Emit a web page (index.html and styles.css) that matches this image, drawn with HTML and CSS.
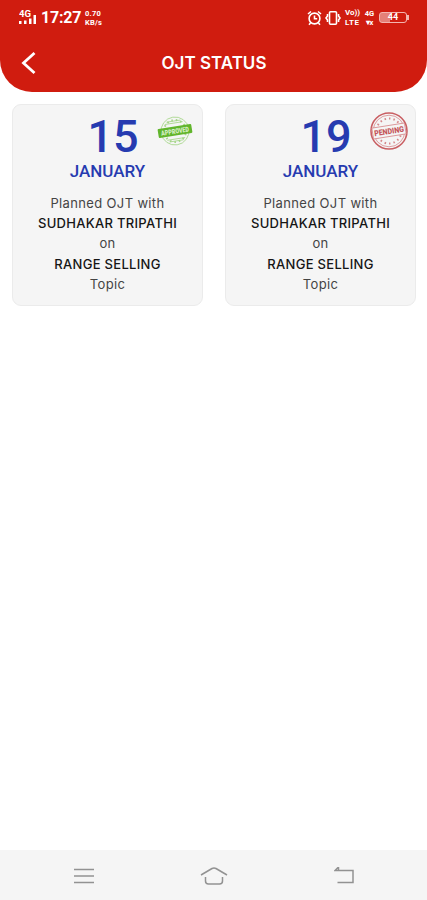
FILE: index.html
```html
<!DOCTYPE html>
<html lang="en">
<head>
  <meta charset="UTF-8">
  <meta name="viewport" content="width=device-width, initial-scale=1">
  <title>OJT Status</title>
  <link rel="stylesheet" href="styles.css">
</head>
<body>
  <header class="header">
    <div class="statusbar">
      <svg class="signal" width="18" height="15" viewBox="0 0 18 15">
        <text x="0" y="7" textLength="12" lengthAdjust="spacingAndGlyphs">4G</text>
        <path d="M0 11h2.500v3H0zM5 10.500h2.500V14H5zM10 8.500h2.500V14H10zM14.500 5H17v9h-2.500z"/>
      </svg>
      <span class="time">17:27</span>
      <div class="speed"><span>0.70</span><span>KB/s</span></div>
      <div class="status-icons">
        <svg class="line-icon" width="15" height="16" viewBox="0 0 15 16">
          <circle cx="7.500" cy="8.500" r="5.400"/>
          <path d="M1 4l3-2.500M14 4l-3-2.500M7.500 5.500v3.300h2.700M3.500 13L2 14.700M11.500 13l1.500 1.700"/>
        </svg>
        <svg class="line-icon vibrate" width="16" height="16" viewBox="0 0 16 16">
          <rect x="4.500" y="1.800" width="7" height="12.400" rx="1"/>
          <path d="M2.500 4v2L1 8l1.500 2v2M13.500 4v2L15 8l-1.500 2v2"/>
        </svg>
        <div class="volte"><span>Vo))</span><span class="lte">LTE</span></div>
        <div class="network"><span>4G</span><span>▾x</span></div>
        <div class="battery"><span>44</span></div>
      </div>
    </div>
    <div class="titlebar">
      <svg class="back" width="16" height="24" viewBox="0 0 16 24"><path d="M14.500 2L3.500 12l11 10"/></svg>
      <h1>OJT STATUS</h1>
    </div>
  </header>

  <main class="cards">
    <div class="card">
      <svg class="stamp approved" width="36" height="36" viewBox="0 0 36 36">
        <g transform="rotate(-9 18 18)">
          <circle class="ring" cx="18" cy="18" r="14"/>
          <circle class="dots" cx="18" cy="18" r="11"/>
          <path class="ring" d="M9 10h18M11 8h14M9 26h18M11 28h14"/>
          <rect class="band" x="1" y="13.500" width="34" height="9" rx="1"/>
          <text x="4" y="20.700" textLength="28" lengthAdjust="spacingAndGlyphs">APPROVED</text>
        </g>
      </svg>
      <div class="day">15</div>
      <div class="month">JANUARY</div>
      <div class="details">
        <p>Planned OJT with</p>
        <p class="name">SUDHAKAR TRIPATHI</p>
        <p>on</p>
        <p class="topic">RANGE SELLING</p>
        <p>Topic</p>
      </div>
    </div>
    <div class="card">
      <svg class="stamp pending" width="40" height="40" viewBox="0 0 40 40">
        <circle class="outer" cx="20" cy="20" r="18"/>
        <circle class="ring" cx="20" cy="20" r="15.800"/>
        <circle class="dots" cx="20" cy="20" r="12.500"/>
        <g transform="rotate(-9 20 20)">
          <rect class="band" x="3.500" y="14.500" width="33" height="11"/>
          <text x="5" y="23" textLength="30" lengthAdjust="spacingAndGlyphs">PENDING</text>
        </g>
      </svg>
      <div class="day">19</div>
      <div class="month">JANUARY</div>
      <div class="details">
        <p>Planned OJT with</p>
        <p class="name">SUDHAKAR TRIPATHI</p>
        <p>on</p>
        <p class="topic">RANGE SELLING</p>
        <p>Topic</p>
      </div>
    </div>
  </main>

  <nav class="navbar">
    <svg width="20" height="18" viewBox="0 0 20 18"><path d="M0 2.500h20M0 9h20M0 15.500h20"/></svg>
    <svg width="28" height="20" viewBox="0 0 28 20"><path d="M1 9l11-6.500q2-1 4 0L27 9M5.500 11v4q0 3 3 3h11q3 0 3-3v-4"/></svg>
    <svg width="20" height="18" viewBox="0 0 20 18"><path d="M4.500 0L1 3.500h18v12H3.500M4.500 0v3.500"/></svg>
  </nav>
</body>
</html>
```

FILE: styles.css
```css
:root {
  --red: #d01c0f;
  --blue: #263bb0;
  --card-bg: #f5f5f5;
}
*, *::before, *::after {
  box-sizing: border-box;
}
body {
  margin: 0;
  height: 100vh;
  display: flex;
  flex-direction: column;
  background: #fff;
  color: #444;
  font-family: Inter, "Liberation Sans", sans-serif;
}
.header {
  height: 92px;
  background: var(--red);
  color: #fff;
  border-radius: 0 0 32px 32px;
}
.statusbar {
  display: flex;
  align-items: center;
  height: 35px;
  padding: 0 17px 0 19px;
  font-family: Roboto, sans-serif;
  font-weight: 700;
}
.signal {
  fill: #fff;
  font-size: 9px;
}
.time {
  width: 40px;
  margin-left: 4px;
  font-size: 16px;
  letter-spacing: -0.2px;
}
.speed, .volte, .network {
  display: flex;
  flex-direction: column;
}
.speed {
  margin-left: 4px;
  font-size: 7.5px;
  line-height: 9px;
  letter-spacing: 0.2px;
}
.status-icons {
  display: flex;
  align-items: center;
  margin-left: auto;
}
.line-icon {
  fill: none;
  stroke: #fff;
  stroke-width: 1.6;
}
.vibrate {
  margin-left: 3px;
}
.volte {
  width: 17px;
  margin-left: 4px;
  font-size: 8px;
  line-height: 9.5px;
}
.lte {
  letter-spacing: 0.6px;
}
.network {
  width: 11px;
  margin-left: 2px;
  align-items: center;
  font-size: 7.5px;
  line-height: 9px;
}
.battery {
  position: relative;
  width: 28px;
  height: 11px;
  margin: 0 3px 0 4px;
  border: 1px solid #f3b5af;
  border-radius: 3px;
  background: linear-gradient(to right, #e58078 40%, transparent 40%);
  font-size: 9px;
  line-height: 9px;
  text-align: center;
}
.battery::after {
  content: "";
  position: absolute;
  top: 2px;
  right: -3px;
  width: 2px;
  height: 5px;
  background: #f3b5af;
}
.titlebar {
  display: flex;
  align-items: center;
  height: 56px;
  padding: 0 20px;
}
.back {
  fill: none;
  stroke: #fff;
  stroke-width: 2.8;
}
.titlebar h1 {
  flex: 1;
  margin: 0 15px 0 0;
  font-size: 17px;
  font-weight: 600;
  text-align: center;
}
.cards {
  flex: 1;
  display: grid;
  grid-template-columns: 1fr 1fr;
  gap: 22px;
  align-items: start;
  padding: 12px 11px 0 12px;
}
.card {
  position: relative;
  height: 202px;
  padding-top: 9px;
  background: var(--card-bg);
  border: 1px solid #ebebeb;
  border-radius: 9px;
  text-align: center;
}
.day, .month {
  color: var(--blue);
  font-family: Roboto, sans-serif;
  font-weight: 500;
}
.day {
  margin-left: 11px;
  font-size: 45px;
  line-height: 46px;
}
.month {
  font-size: 17px;
  line-height: 22px;
}
.details {
  margin-top: 11px;
  font-size: 13px;
  line-height: 20.2px;
}
.details p {
  margin: 0;
  letter-spacing: 0.35px;
}
.details .name, .details .topic {
  color: #161616;
  font-weight: 500;
  letter-spacing: 0.3px;
}
.stamp {
  position: absolute;
  overflow: visible;
  font-family: Roboto, sans-serif;
  font-weight: 900;
}
.stamp .dots {
  fill: none;
  stroke-width: 2;
  stroke-dasharray: 1.5 3;
}
.stamp .ring {
  fill: none;
  stroke-width: 0.8;
}
.approved {
  top: 8px;
  right: 9px;
  stroke: #a4d587;
}
.approved .band {
  fill: #61b52c;
  stroke: none;
}
.approved text {
  fill: #d9f0c8;
  stroke: none;
  font-size: 7px;
}
.pending {
  top: 6px;
  right: 6px;
  stroke: #d6888b;
}
.pending .outer {
  fill: none;
  stroke: #c95f63;
  stroke-width: 1.6;
}
.pending .band {
  fill: var(--card-bg);
  stroke-width: 0.8;
}
.pending text {
  fill: #c4565b;
  stroke: none;
  font-size: 8px;
}
.navbar {
  display: flex;
  justify-content: space-between;
  align-items: center;
  height: 50px;
  padding: 2px 73px 0 74px;
  background: #f5f5f5;
}
.navbar svg {
  fill: none;
  stroke: #929292;
  stroke-width: 1.5;
}
```
